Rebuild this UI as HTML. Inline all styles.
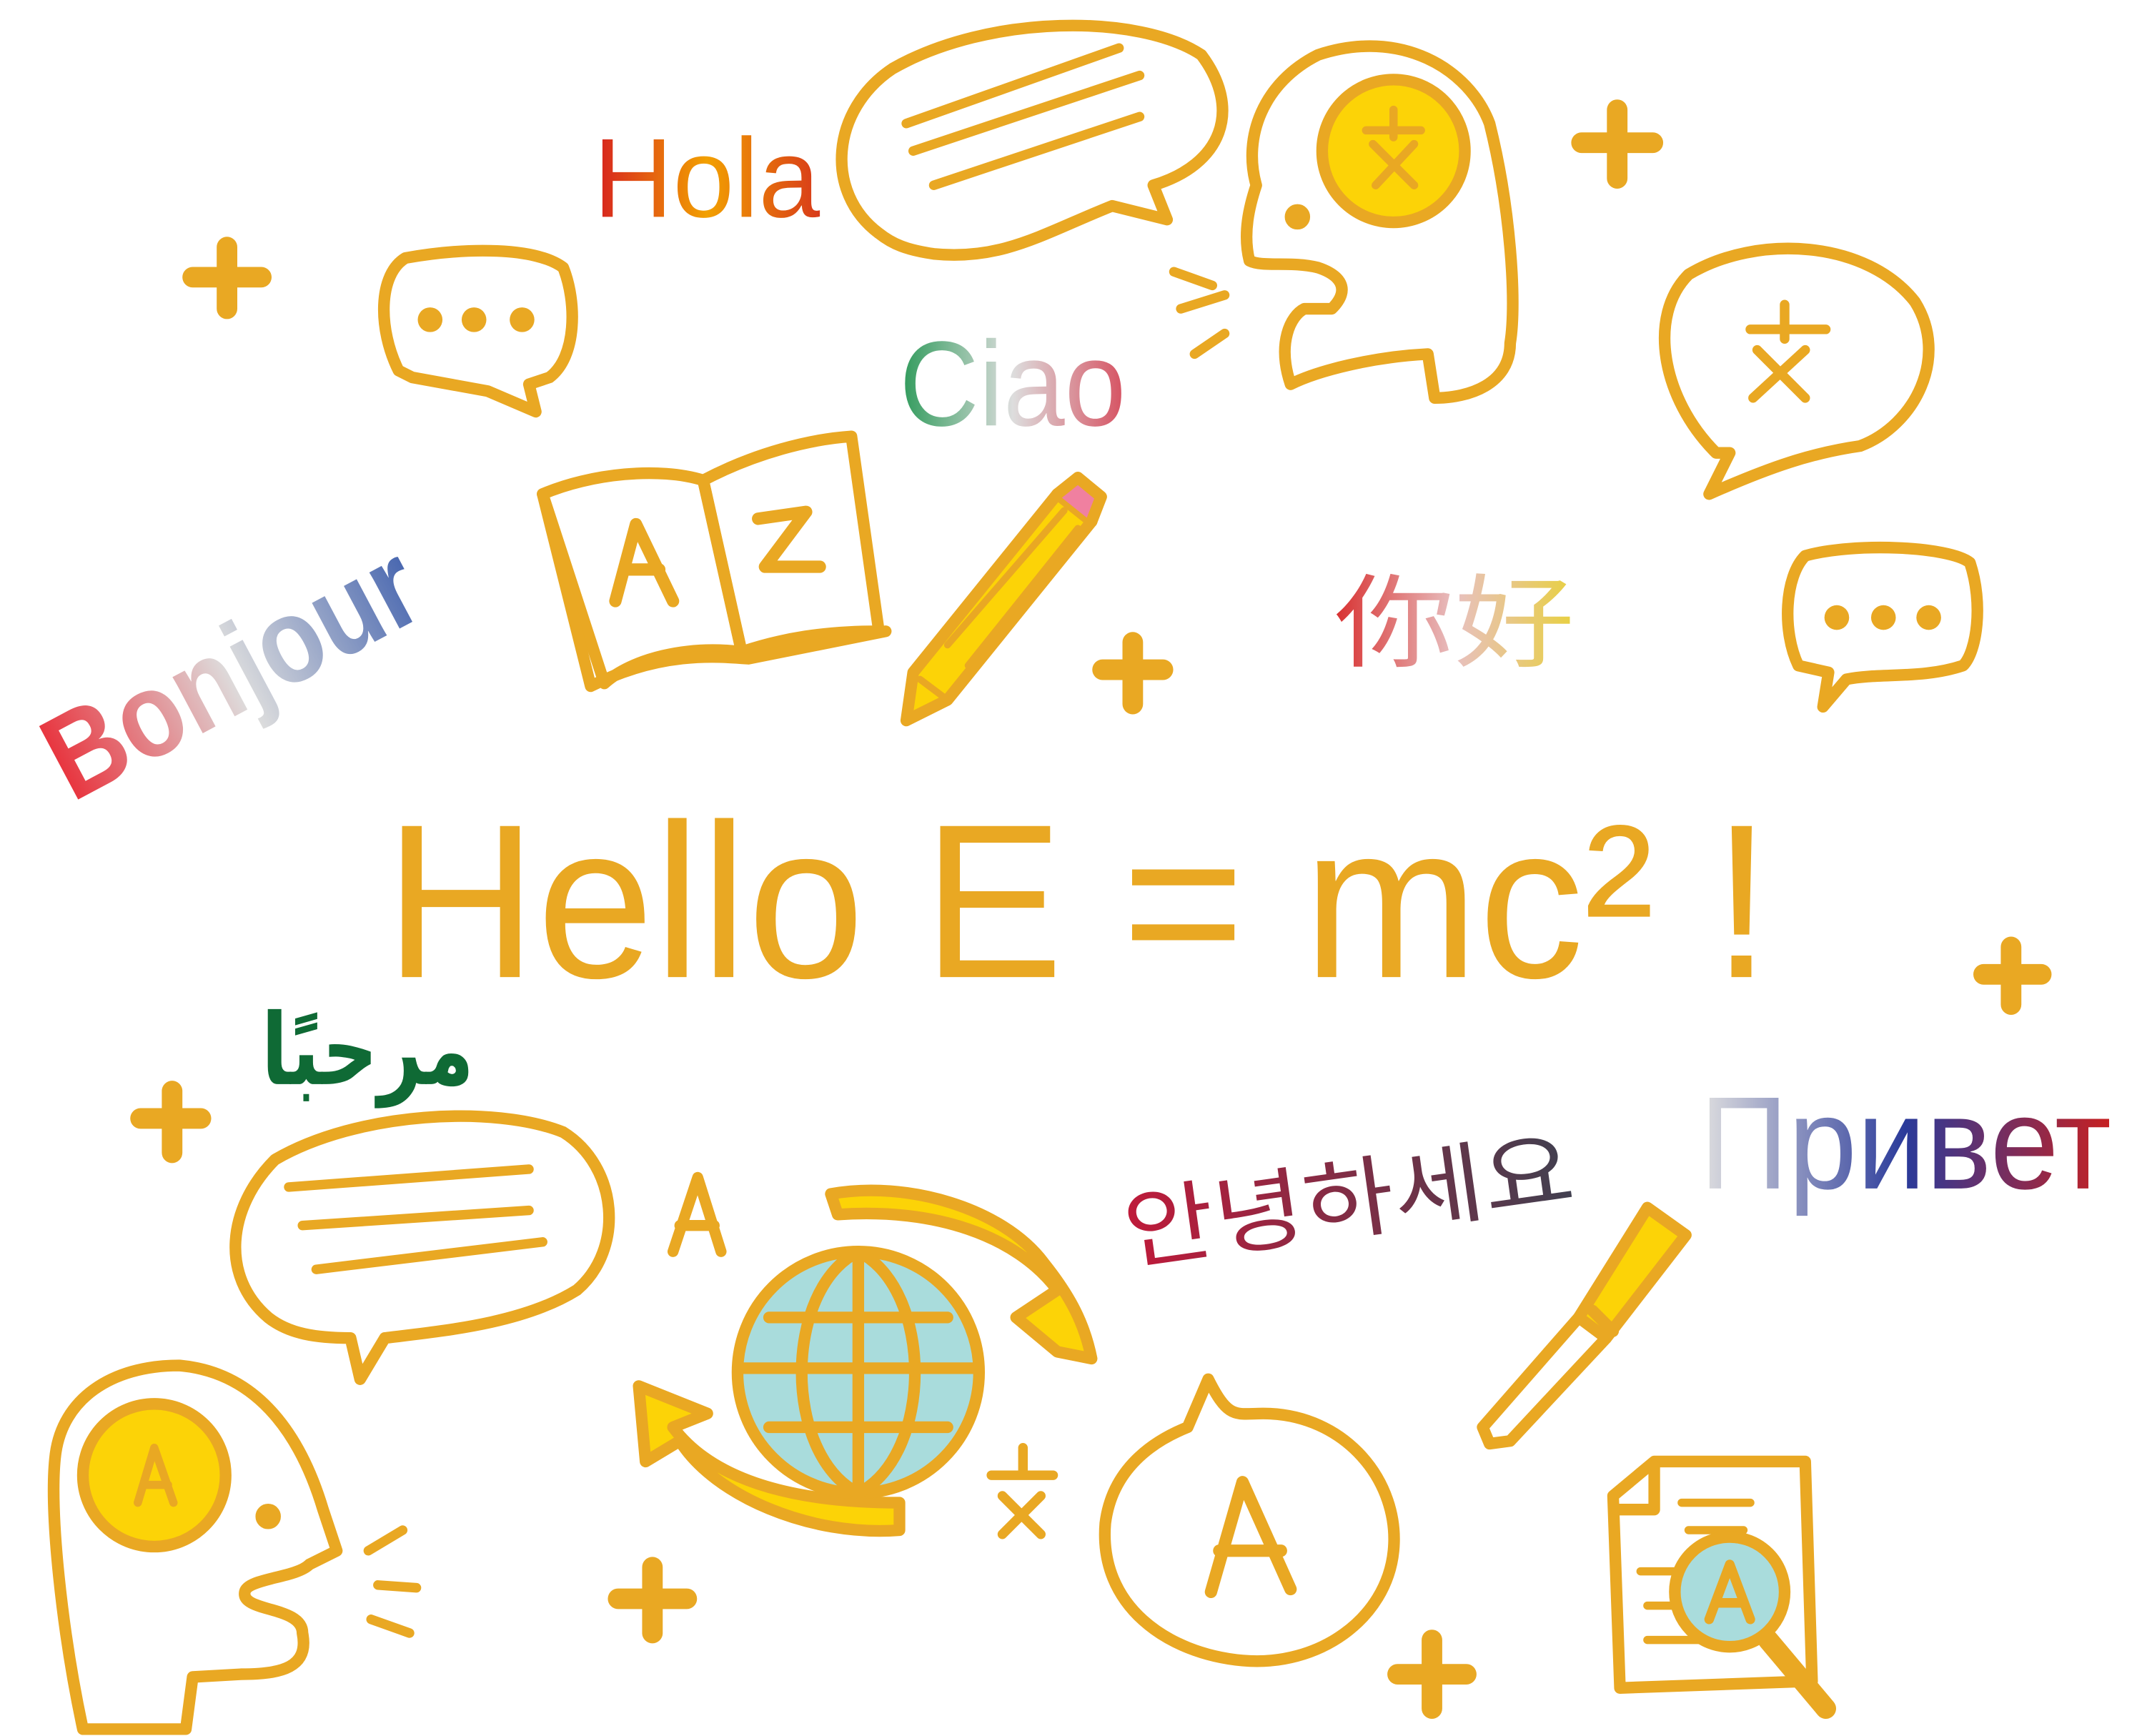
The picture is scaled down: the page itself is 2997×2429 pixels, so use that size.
<!DOCTYPE html>
<html><head><meta charset="utf-8">
<style>
html,body{margin:0;padding:0;background:#fff;}
svg{display:block;width:2997px;height:2429px;}
text{font-family:"Liberation Sans","Noto Sans CJK SC","DejaVu Sans",sans-serif;}
</style></head>
<body>
<svg viewBox="0 0 1560 1265" xmlns="http://www.w3.org/2000/svg">
<defs>
<linearGradient id="gHola" x1="0" x2="1"><stop offset="0" stop-color="#d62020"/><stop offset=".5" stop-color="#f2a000"/><stop offset="1" stop-color="#d83a1a"/></linearGradient>
<linearGradient id="gCiao" x1="0" x2="1"><stop offset="0" stop-color="#2e9a5a"/><stop offset=".5" stop-color="#dddddd"/><stop offset="1" stop-color="#d65060"/></linearGradient>
<linearGradient id="gBon" x1="0" x2="1"><stop offset="0" stop-color="#e8303a"/><stop offset=".5" stop-color="#dddddd"/><stop offset="1" stop-color="#4a68b0"/></linearGradient>
<linearGradient id="gNi" x1="0" x2="1"><stop offset="0" stop-color="#d83030"/><stop offset=".5" stop-color="#e8c0c0"/><stop offset="1" stop-color="#e8d040"/></linearGradient>
<linearGradient id="gPr" x1="0" x2="1"><stop offset="0" stop-color="#e0e0e0"/><stop offset=".5" stop-color="#2a3a9a"/><stop offset="1" stop-color="#c82020"/></linearGradient>
<linearGradient id="gKo" x1="0" x2="1"><stop offset="0" stop-color="#c01a3a"/><stop offset="1" stop-color="#404050"/></linearGradient>
</defs>

<g fill="none" stroke="#E9A823" stroke-width="8.5" stroke-linecap="round" stroke-linejoin="round">
<g stroke-width="15">
<path d="M140 202h50M165 180v45"/>
<path d="M1152 104h52M1178 80v50"/>
<path d="M803 488h44M825 468v45"/>
<path d="M1445 710h42M1465 690v42"/>
<path d="M102 815h44M125 795v45"/>
<path d="M450 1165h50M475 1142v48"/>
<path d="M1018 1220h50M1043 1195v50"/>
</g>

<path d="M640 170C600 140 605 80 650 50C720 10 830 10 875 40C905 80 890 120 840 135L850 160L810 150C760 170 730 190 680 185C660 182 650 178 640 170Z"/>
<path d="M660 90L815 35M665 110L830 55M680 135L830 85" stroke-width="7"/>

<path d="M940 280C930 250 940 230 950 225L970 225C985 210 975 200 960 195C940 190 920 195 910 190C905 170 910 150 915 135C905 100 920 60 960 40C1020 20 1070 50 1085 90C1100 150 1105 220 1100 250C1100 280 1070 290 1045 290L1040 258C1000 260 960 270 940 280Z"/>
<circle cx="1015" cy="110" r="52" fill="#FCD307"/>
<path d="M995 95h40M1015 80v20M1000 105l30 30M1030 105l-28 30" stroke-width="6"/>
<circle cx="945" cy="158" r="5" fill="#E9A823"/>
<path d="M855 198l28 10M860 225l32-10M870 258l22-15" stroke-width="7"/>

<path d="M290 270C275 240 275 200 295 188C340 180 390 180 410 195C420 220 420 260 400 275L385 280L390 300L355 285L300 275Z"/>
<g fill="#E9A823" stroke="none"><circle cx="313" cy="233" r="9"/><circle cx="345" cy="233" r="9"/><circle cx="380" cy="233" r="9"/></g>

<path d="M1250 330C1210 290 1200 230 1230 200C1280 170 1360 175 1395 220C1420 260 1395 310 1355 325C1320 330 1290 340 1245 360L1260 330Z"/>
<path d="M1275 240h55M1300 222v25M1280 255l35 35M1315 255l-38 35" stroke-width="7"/>

<path d="M1310 485C1298 460 1300 420 1315 405C1350 395 1420 398 1435 410C1445 440 1440 475 1430 485C1400 495 1370 490 1345 495L1328 515L1332 490Z"/>
<g fill="#E9A823" stroke="none"><circle cx="1338" cy="450" r="9"/><circle cx="1372" cy="450" r="9"/><circle cx="1405" cy="450" r="9"/></g>

<path d="M395 360C430 345 480 340 512 350L540 475C500 470 460 480 440 498Z"/>
<path d="M512 350C550 330 590 320 620 318L640 460C600 460 570 465 540 475Z"/>
<path d="M395 360L430 500C480 475 520 478 545 480L645 460"/>
<path d="M448 438L463 382L490 438M455 415h25M552 378l35-5-30 40h40" stroke-width="9"/>

<path d="M665 490L770 360L795 380L690 510L660 525Z" fill="#FCD307"/>
<path d="M770 360L785 348L802 362L795 380" fill="#F080A0"/>
<path d="M690 470L775 372M705 485L785 385M670 495L690 510" stroke-width="5"/>

<path d="M195 960C160 930 165 880 200 845C260 810 360 805 410 825C450 850 455 910 420 940C380 965 320 970 280 975L262 1005L255 975C230 975 210 972 195 960Z"/>
<path d="M210 865L385 852M220 893L385 882M230 925L395 905" stroke-width="7"/>

<path d="M60 1260C45 1190 35 1100 40 1060C45 1020 80 995 130 995C190 1000 220 1050 235 1100C240 1115 245 1130 245 1130L225 1140C215 1150 180 1150 178 1160C175 1175 220 1170 220 1190C225 1215 205 1220 175 1220L140 1222L135 1260Z"/>
<circle cx="112" cy="1075" r="52" fill="#FCD307"/>
<path d="M100 1095l12-40 14 40M104 1082h18" stroke-width="6"/>
<circle cx="195" cy="1105" r="5" fill="#E9A823"/>
<path d="M268 1130l25-15M275 1155l28 2M270 1180l28 10" stroke-width="7"/>

<path d="M490 912L508 858L525 912M495 893h25" stroke-width="8"/>

<path d="M605 870C660 860 730 880 760 920C780 945 790 965 795 990L770 985L740 960L770 940C740 900 680 880 610 885Z" fill="#FCD307"/>
<path d="M655 1115C590 1120 520 1090 495 1050L470 1065L465 1010L515 1030L490 1040C520 1080 580 1095 655 1095Z" fill="#FCD307"/>
<circle cx="625" cy="1000" r="88" fill="#A9DCDC"/>
<path d="M540 997h170M560 960h130M560 1040h130M625 912v176M625 912C570 940 570 1060 625 1088M625 912C680 940 680 1060 625 1088"/>

<path d="M722 1075h45M745 1055v20M730 1090l28 28M758 1090l-28 28" stroke-width="7"/>

<path d="M880 1005C895 1035 900 1030 920 1030C980 1030 1020 1080 1015 1130C1010 1180 960 1215 905 1210C850 1205 800 1170 805 1110C810 1070 840 1050 865 1040Z"/>
<path d="M882 1160L905 1080L940 1158M888 1130h45" stroke-width="9"/>

<path d="M1080 1040L1150 960L1170 975L1100 1050L1085 1052Z"/>
<path d="M1150 960L1200 880L1228 900L1170 975Z" fill="#FCD307"/>
<path d="M1160 955l15 15"/>

<path d="M1175 1090L1205 1065L1315 1065L1320 1225L1180 1230Z"/>
<path d="M1178 1100L1205 1100L1205 1068"/>
<path d="M1225 1095h50M1230 1115h40M1195 1145h40M1200 1170h30M1200 1195h60" stroke-width="6"/>
<circle cx="1260" cy="1160" r="40" fill="#A9DCDC"/>
<path d="M1245 1180l15-40 15 40M1250 1168h20" stroke-width="7"/>
<path d="M1288 1195L1330 1245" stroke-width="15"/>
</g>

<text x="432" y="158" font-size="82" fill="url(#gHola)" textLength="165" lengthAdjust="spacingAndGlyphs">Hola</text>
<text x="655" y="310" font-size="88" fill="url(#gCiao)" textLength="165" lengthAdjust="spacingAndGlyphs">Ciao</text>
<text x="0" y="0" font-size="88" font-weight="bold" fill="url(#gBon)" transform="translate(52 585) rotate(-28)" textLength="295" lengthAdjust="spacingAndGlyphs">Bonjour</text>
<text x="972" y="480" font-size="74" fill="url(#gNi)" textLength="175" lengthAdjust="spacingAndGlyphs">你好</text>
<text x="190" y="790" font-size="72" font-weight="bold" fill="#0f6a35" textLength="155" lengthAdjust="spacingAndGlyphs" font-family="DejaVu Sans, sans-serif">مرحبًا</text>
<text x="1238" y="866" font-size="96" fill="url(#gPr)" textLength="300" lengthAdjust="spacingAndGlyphs">Привет</text>
<text x="0" y="0" font-size="64" fill="url(#gKo)" transform="translate(822 920) rotate(-8)" textLength="330" lengthAdjust="spacingAndGlyphs" font-family="Noto Sans CJK KR, sans-serif">안녕하세요</text>
<text x="280" y="712" font-size="160" fill="#E9A823" textLength="1010" lengthAdjust="spacingAndGlyphs">Hello E = mc² !</text>
</svg>
</body></html>
